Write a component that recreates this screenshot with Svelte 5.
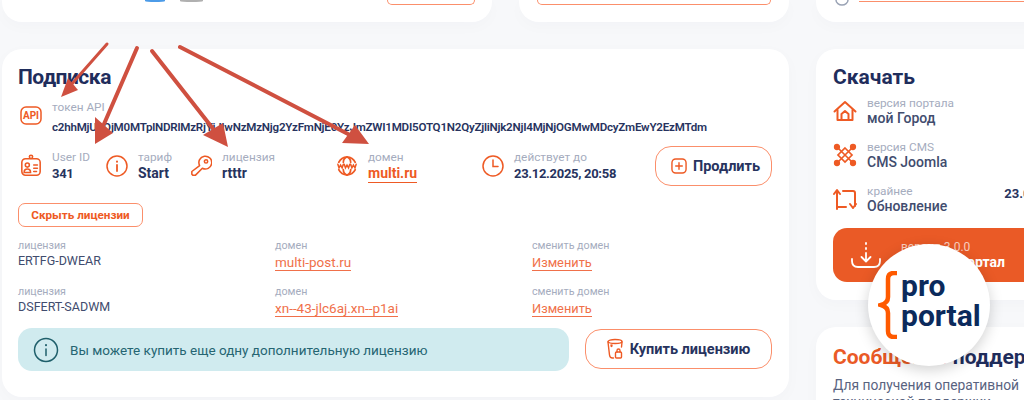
<script>
  const licenses = [
    { key: 'ERTFG-DWEAR', domain: 'multi-post.ru' },
    { key: 'DSFERT-SADWM', domain: 'xn--43-jlc6aj.xn--p1ai' }
  ]
</script>

<div class="page">
  <div class="top-row">
    <div class="card top-a">
      <div class="dots"><span class="dot blue"></span><span class="dot grey"></span></div>
      <div class="ghost-btn small"></div>
    </div>
    <div class="card top-b"><div class="ghost-btn wide"></div></div>
    <div class="card top-c">
      <svg class="gear" width="14" height="6" viewBox="0 0 14 6"><path d="M1 0c0 3 3 5 6 5s6-2 6-5" fill="none" stroke="#9aa3b5" stroke-width="1.5" /></svg>
      <span class="top-line"></span>
    </div>
  </div>

  <div class="main-row">
    <section class="card sub">
      <h2 class="sub-title">Подписка</h2>

      <div class="token">
        <svg class="ico" width="22" height="19" viewBox="0 0 22 19" fill="none" stroke="#ee5a24" stroke-width="1.5">
          <rect x="1" y="1" width="20" height="17" rx="5" />
          <text x="11" y="13" text-anchor="middle" class="api-text">API</text>
        </svg>
        <div class="pair">
          <span class="lbl">токен API</span>
          <span class="token-val">c2hhMjU2OjM0MTplNDRlMzRjYjJlwNzMzNjg2YzFmNjE0YzJmZWI1MDI5OTQ1N2QyZjliNjk2NjI4MjNjOGMwMDcyZmEwY2EzMTdm</span>
        </div>
      </div>

      <div class="stats">
        <div class="stat s-user">
          <svg width="22" height="24" viewBox="0 0 24 26" fill="none" stroke="#ee5a24" stroke-width="1.7" stroke-linecap="round">
            <rect x="2" y="5" width="20" height="18" rx="4" />
            <circle cx="12" cy="3" r="1.8" />
            <circle cx="8" cy="12" r="2.2" />
            <path d="M4.5 20c0-5 7-5 7 0zM15 12h4M15 15.5h4M15 19h3" />
          </svg>
          <div class="pair"><span class="lbl">User ID</span><b class="num">341</b></div>
        </div>
        <div class="stat s-plan">
          <svg width="22" height="22" viewBox="0 0 22 22" fill="none" stroke="#ee5a24" stroke-width="1.5" stroke-linecap="round">
            <circle cx="11" cy="11" r="10" />
            <path d="M11 10v6" stroke-width="1.8" />
            <path d="M11 6.5v.3" stroke-width="2" />
          </svg>
          <div class="pair"><span class="lbl">тариф</span><b>Start</b></div>
        </div>
        <div class="stat s-lic">
          <svg width="22" height="22" viewBox="0 0 24 24" fill="none" stroke="#ee5a24" stroke-width="1.7" stroke-linejoin="round">
            <path d="M10.5 11.5a7 7 0 1 1 3 3L6 22H3l-1-1v-3z" />
            <circle cx="17.5" cy="7" r="1.8" />
          </svg>
          <div class="pair"><span class="lbl">лицензия</span><b>rtttr</b></div>
        </div>
        <div class="stat s-dom">
          <svg width="22" height="22" viewBox="0 0 24 24" fill="none" stroke="#ee5a24" stroke-width="1.9" stroke-linecap="round">
            <path d="M3 8a10 10 0 0 1 18 0M3 16a10 10 0 0 0 18 0" />
            <path d="M12 2c-3 1.500-4 3.500-4 6M12 2c3 1.500 4 3.500 4 6M12 22c-3-1.500-4-3.500-4-6M12 22c3-1.500 4-3.500 4-6" />
            <path d="M2 10l1.300 4 1.700-3 1.700 3L8 10M9 10l1.300 4 1.700-3 1.700 3L15 10M16 10l1.300 4 1.700-3 1.700 3L22 10" stroke-width="1.600" />
          </svg>
          <div class="pair"><span class="lbl">домен</span><a href="#top" class="strong-link">multi.ru</a></div>
        </div>
        <div class="stat s-exp">
          <svg width="22" height="22" viewBox="0 0 22 22" fill="none" stroke="#ee5a24" stroke-width="1.5" stroke-linecap="round">
            <circle cx="11" cy="11" r="10" />
            <path d="M11 5v6.500h5" />
          </svg>
          <div class="pair"><span class="lbl">действует до</span><b class="num">23.12.2025, 20:58</b></div>
        </div>
        <button class="btn extend">
          <svg width="16" height="16" viewBox="0 0 17 17" fill="none" stroke="#ee5a24" stroke-width="1.500" stroke-linecap="round">
            <rect x="1" y="1" width="15" height="15" rx="4" />
            <path d="M8.500 5v7M5 8.500h7" />
          </svg>
          Продлить
        </button>
      </div>

      <button class="hide-btn">Скрыть лицензии</button>

      {#each licenses as lic}
        <div class="lic-row">
          <div class="pair"><span class="lbl-sm">лицензия</span><span class="lic-key">{lic.key}</span></div>
          <div class="pair"><span class="lbl-sm">домен</span><span><a href="#top" class="link">{lic.domain}</a></span></div>
          <div class="pair"><span class="lbl-sm">сменить домен</span><span><a href="#top" class="link change">Изменить</a></span></div>
        </div>
      {/each}

      <div class="buy-row">
        <div class="notice">
          <svg width="26" height="26" viewBox="0 0 26 26" fill="none" stroke="#1f5f6b" stroke-width="1.500" stroke-linecap="round">
            <circle cx="13" cy="13" r="11.500" />
            <path d="M13 12v6.500" />
            <path d="M13 8v.2" stroke-width="2" />
          </svg>
          <span>Вы можете купить еще одну дополнительную лицензию</span>
        </div>
        <button class="btn buy">
          <svg width="17" height="22" viewBox="0 0 17 22" fill="none" stroke="#ee5a24" stroke-width="1.400" stroke-linecap="round" stroke-linejoin="round">
            <ellipse cx="8" cy="3.500" rx="7" ry="2" />
            <path d="M1 4l1.500 13q.3 3 3 3h1M15 4l-.5 5M4 7c0 2 1 2 1 0" />
            <rect x="8.500" y="14" width="6" height="6" rx="1" />
            <path d="M10 14v-1.500a1.500 1.500 0 0 1 3 0V14" />
          </svg>
          Купить лицензию
        </button>
      </div>
    </section>

    <div class="side">
      <section class="card download">
        <h2>Скачать</h2>
        <div class="dl-row">
          <svg width="24" height="22" viewBox="0 0 24 22" fill="none" stroke="#ee5a24" stroke-width="2" stroke-linejoin="round" stroke-linecap="round">
            <path d="M1.500 11.500L12 2l10.500 9.500" />
            <path d="M4.500 10v10h15V10" />
            <path d="M8.500 20v-6l3.500-3 3.500 3v6z" />
          </svg>
          <div class="pair"><span class="lbl">версия портала</span><span class="dl-val">мой Город</span></div>
        </div>
        <div class="dl-row">
          <svg width="24" height="24" viewBox="0 0 24 24" fill="none" stroke="#ee5a24" stroke-width="1.700" stroke-linecap="round">
            <path d="M4 4l16 16M20 4L4 20M12 5l7 7-7 7-7-7z" />
            <circle cx="4" cy="4" r="2.300" fill="#ee5a24" /><circle cx="20" cy="4" r="2.300" fill="#ee5a24" />
            <circle cx="4" cy="20" r="2.300" fill="#ee5a24" /><circle cx="20" cy="20" r="2.300" fill="#ee5a24" />
          </svg>
          <div class="pair"><span class="lbl">версия CMS</span><span class="dl-val">CMS Joomla</span></div>
        </div>
        <div class="dl-row">
          <svg width="24" height="24" viewBox="0 0 24 24" fill="none" stroke="#ee5a24" stroke-width="2" stroke-linecap="round" stroke-linejoin="round">
            <path d="M4 22V4M1 7l3-4 3 4M10 4h10q2 0 2 2v13" />
            <path d="M22 21l-3-4M22 21l3-4M15 20H6" transform="translate(-2 0)" />
          </svg>
          <div class="pair"><span class="lbl">крайнее</span><span class="dl-val">Обновление</span></div>
          <b class="dl-date">23.07.2025</b>
        </div>
        <button class="dl-btn">
          <svg width="30" height="27" viewBox="0 0 30 27" fill="none" stroke="#fff" stroke-width="1.800" stroke-linecap="round" stroke-linejoin="round">
            <path d="M15 1v1M15 6v1M15 11v8M10.500 15l4.500 4.500 4.500-4.500" />
            <path d="M1 17v2q0 6 6 6h16q6 0 6-6v-2" />
          </svg>
          <span class="dl-text"><small>версия 3.0.0</small><b>Скачать портал</b></span>
        </button>
      </section>
      <section class="card support">
        <h3><em>Сообщение</em> поддержке</h3>
        <p>Для получения оперативной технической поддержки, вступайте</p>
      </section>
    </div>
  </div>

  <svg class="arrows" width="400" height="160" viewBox="0 0 400 160" fill="#cf5040" stroke="#cf5040" stroke-linecap="round">
    <path d="M107 44L70 86" stroke-width="3" /><path d="M61 97l7-19 10 12z" stroke="none" />
    <path d="M137 48L104 124" stroke-width="4" /><path d="M95 144v-27l18 16z" stroke="none" />
    <path d="M152 51l62 79" stroke-width="4" /><path d="M228 147l-25-12 20-12z" stroke="none" />
    <path d="M180 47l168 87" stroke-width="4" /><path d="M369 144l-27-1 13-18z" stroke="none" />
  </svg>

  <div class="badge">
    <svg class="brace" width="20" height="68" viewBox="0 0 20 68" fill="none" stroke="#ff5a00" stroke-width="4.500">
      <path d="M19 2h-3q-6 0-6 6v18q0 6-7 8 7 2 7 8v18q0 6 6 6h3" />
    </svg>
    <span class="badge-text">pro<br />portal</span>
  </div>
</div>

<style>
  :global(body) {
    margin: 0;
    background: #f7f8fa;
  }

  .page {
    position: relative;
    width: 1024px;
    height: 400px;
    overflow: hidden;
    padding-left: 2px;
    box-sizing: border-box;
    font-family: Roboto, 'Noto Sans', sans-serif;
    color: #27335e;
  }

  svg {
    flex: none;
  }

  .card {
    background: #fff;
    border-radius: 20px;
    box-shadow: 0 4px 16px rgba(40, 50, 90, 0.025);
  }

  .top-row {
    display: flex;
    gap: 27px;
    height: 22px;
  }

  .top-row .card {
    border-radius: 0 0 20px 20px;
    display: flex;
    box-sizing: border-box;
    height: 22px;
  }

  .top-a {
    width: 490px;
    justify-content: space-between;
    padding: 0 17px 0 143px;
  }

  .dots {
    display: flex;
    gap: 15px;
  }

  .dot {
    width: 20px;
    height: 2px;
    border-radius: 0 0 50% 50%;
  }

  .dot.blue {
    background: #4c9be8;
  }

  .dot.grey {
    width: 23px;
    background: #b0b0b0;
  }

  .ghost-btn {
    height: 4px;
    border: 1px solid #fb8f6b;
    border-top: 0;
    border-radius: 0 0 16px 16px;
  }

  .small {
    width: 86px;
  }

  .wide {
    width: 232px;
  }

  .top-b {
    width: 270px;
    justify-content: center;
  }

  .top-c {
    flex: 1;
    gap: 10px;
    padding-left: 19px;
    margin-right: -60px;
  }

  .gear {
    display: block;
  }

  .top-line {
    width: 200px;
    height: 1px;
    margin-top: 1px;
    background: #fb8f6b;
  }

  .main-row {
    display: flex;
    gap: 27px;
    margin-top: 27px;
    align-items: flex-start;
  }

  .sub {
    width: 787px;
    height: 348px;
    box-sizing: border-box;
    padding: 15px 16px 0;
    flex: none;
  }

  h2 {
    margin: 0;
    font-size: 21px;
    line-height: 27px;
    font-weight: 700;
    color: #1f2d5c;
  }

  .sub-title {
    letter-spacing: -0.5px;
  }

  .pair {
    display: flex;
    flex-direction: column;
  }

  .lbl {
    font-size: 11.800px;
    line-height: 15px;
    color: #a5acbe;
  }

  .token {
    display: flex;
    gap: 10px;
    margin: 9px 0 0 2px;
    align-items: flex-start;
  }

  .ico {
    margin-top: 6px;
  }

  .api-text {
    font-size: 10px;
    font-weight: 700;
    fill: #ee5a24;
    stroke: none;
  }

  .token-val {
    font-size: 11.600px;
    line-height: 24px;
    font-weight: 600;
    letter-spacing: -0.23px;
    white-space: nowrap;
  }

  .stats {
    display: flex;
    align-items: center;
    margin: 7px 0 0 2px;
    height: 40px;
  }

  .stat {
    display: flex;
    align-items: center;
    gap: 10px;
    flex: none;
  }

  .stat b,
  .strong-link {
    font-size: 14px;
    line-height: 17px;
    font-weight: 700;
  }

  .stat b.num {
    font-size: 13px;
    letter-spacing: -0.3px;
  }

  .s-user {
    width: 86px;
  }

  .s-plan {
    width: 84px;
  }

  .s-lic {
    width: 146px;
  }

  .s-dom {
    width: 146px;
  }

  .s-exp {
    width: 173px;
  }

  .strong-link {
    color: #ee5a24;
    text-decoration: none;
    border-bottom: 1px solid #ee5a24;
    align-self: flex-start;
  }

  .btn {
    display: flex;
    align-items: center;
    justify-content: center;
    gap: 6px;
    height: 40px;
    background: #fff;
    border: 1px solid #fb8f6b;
    border-radius: 16px;
    font: 700 14.500px Roboto, sans-serif;
    color: #27335e;
    padding: 0;
  }

  .extend {
    width: 117px;
    padding-left: 4px;
  }

  .hide-btn {
    display: block;
    margin-top: 17px;
    width: 125px;
    height: 24px;
    padding: 0;
    background: #fff;
    border: 1px solid #fb8f6b;
    border-radius: 7px;
    color: #ee5a24;
    font: 700 11.700px Roboto, sans-serif;
  }

  .lic-row {
    display: grid;
    grid-template-columns: 257px 257px 1fr;
    margin-top: 13px;
    height: 35px;
  }

  .lic-row + .lic-row {
    margin-top: 11px;
  }

  .lbl-sm {
    font-size: 10.700px;
    line-height: 12px;
    color: #a5acbe;
  }

  .lic-key {
    font-size: 12.500px;
    line-height: 17px;
    color: #414c6e;
  }

  .link {
    font-size: 13.500px;
    line-height: 16px;
    color: #f0704a;
    text-decoration: none;
    border-bottom: 1px solid #f0704a;
  }

  .change {
    font-size: 12.800px;
  }

  .buy-row {
    display: flex;
    gap: 16px;
    margin-top: 7px;
    align-items: flex-start;
  }

  .notice {
    width: 551px;
    height: 43px;
    background: #d0ebef;
    border-radius: 14px;
    display: flex;
    align-items: center;
    gap: 11px;
    padding-left: 15px;
    box-sizing: border-box;
    font-size: 13.500px;
    color: #256572;
  }

  .buy {
    width: 187px;
    margin-top: 1px;
  }

  .side {
    width: 260px;
    flex: none;
    display: flex;
    flex-direction: column;
    gap: 27px;
  }

  .download {
    height: 251px;
    box-sizing: border-box;
    padding: 15px 17px 0;
  }

  .dl-row {
    display: flex;
    gap: 10px;
    align-items: center;
    margin-top: 14px;
    height: 30px;
  }

  h2 + .dl-row {
    margin-top: 5px;
  }

  .dl-val {
    font-size: 14px;
    line-height: 15px;
    font-weight: 500;
    color: #414c6e;
  }

  .dl-date {
    font-size: 13px;
    margin-left: 47px;
    margin-top: -12px;
    white-space: nowrap;
  }

  .dl-btn {
    display: flex;
    align-items: center;
    gap: 20px;
    width: 260px;
    height: 54px;
    margin-top: 14px;
    padding: 0 0 0 18px;
    border: 0;
    border-radius: 14px;
    background: #ea5a26;
    color: #fff;
    font-family: Roboto, sans-serif;
  }

  .dl-text {
    display: flex;
    flex-direction: column;
    text-align: left;
  }

  .dl-text small {
    font-size: 12px;
    opacity: 0.7;
  }

  .dl-text b {
    font-size: 14px;
  }

  .support {
    height: 100px;
    padding: 17px 17px;
    box-sizing: border-box;
  }

  h3 {
    margin: 0;
    font-size: 21px;
    line-height: 27px;
    font-weight: 700;
    white-space: nowrap;
    color: #1f2d5c;
  }

  h3 em {
    font-style: normal;
    color: #ea5a26;
  }

  .support p {
    margin: 6px 0 0;
    font-size: 13.800px;
    line-height: 17px;
    color: #59637f;
    width: 190px;
  }

  .arrows {
    position: absolute;
    left: 0;
    top: 0;
    pointer-events: none;
  }

  .badge {
    position: absolute;
    left: 868px;
    top: 244px;
    width: 122px;
    height: 122px;
    border-radius: 50%;
    background: #fff;
    box-shadow: 0 4px 14px rgba(0, 0, 0, 0.18);
    display: flex;
    align-items: center;
    gap: 3px;
    padding-left: 10px;
    box-sizing: border-box;
  }

  .badge-text {
    font-size: 30px;
    line-height: 30px;
    font-weight: 700;
    color: #0b2a5c;
    margin-top: -8px;
  }
</style>
